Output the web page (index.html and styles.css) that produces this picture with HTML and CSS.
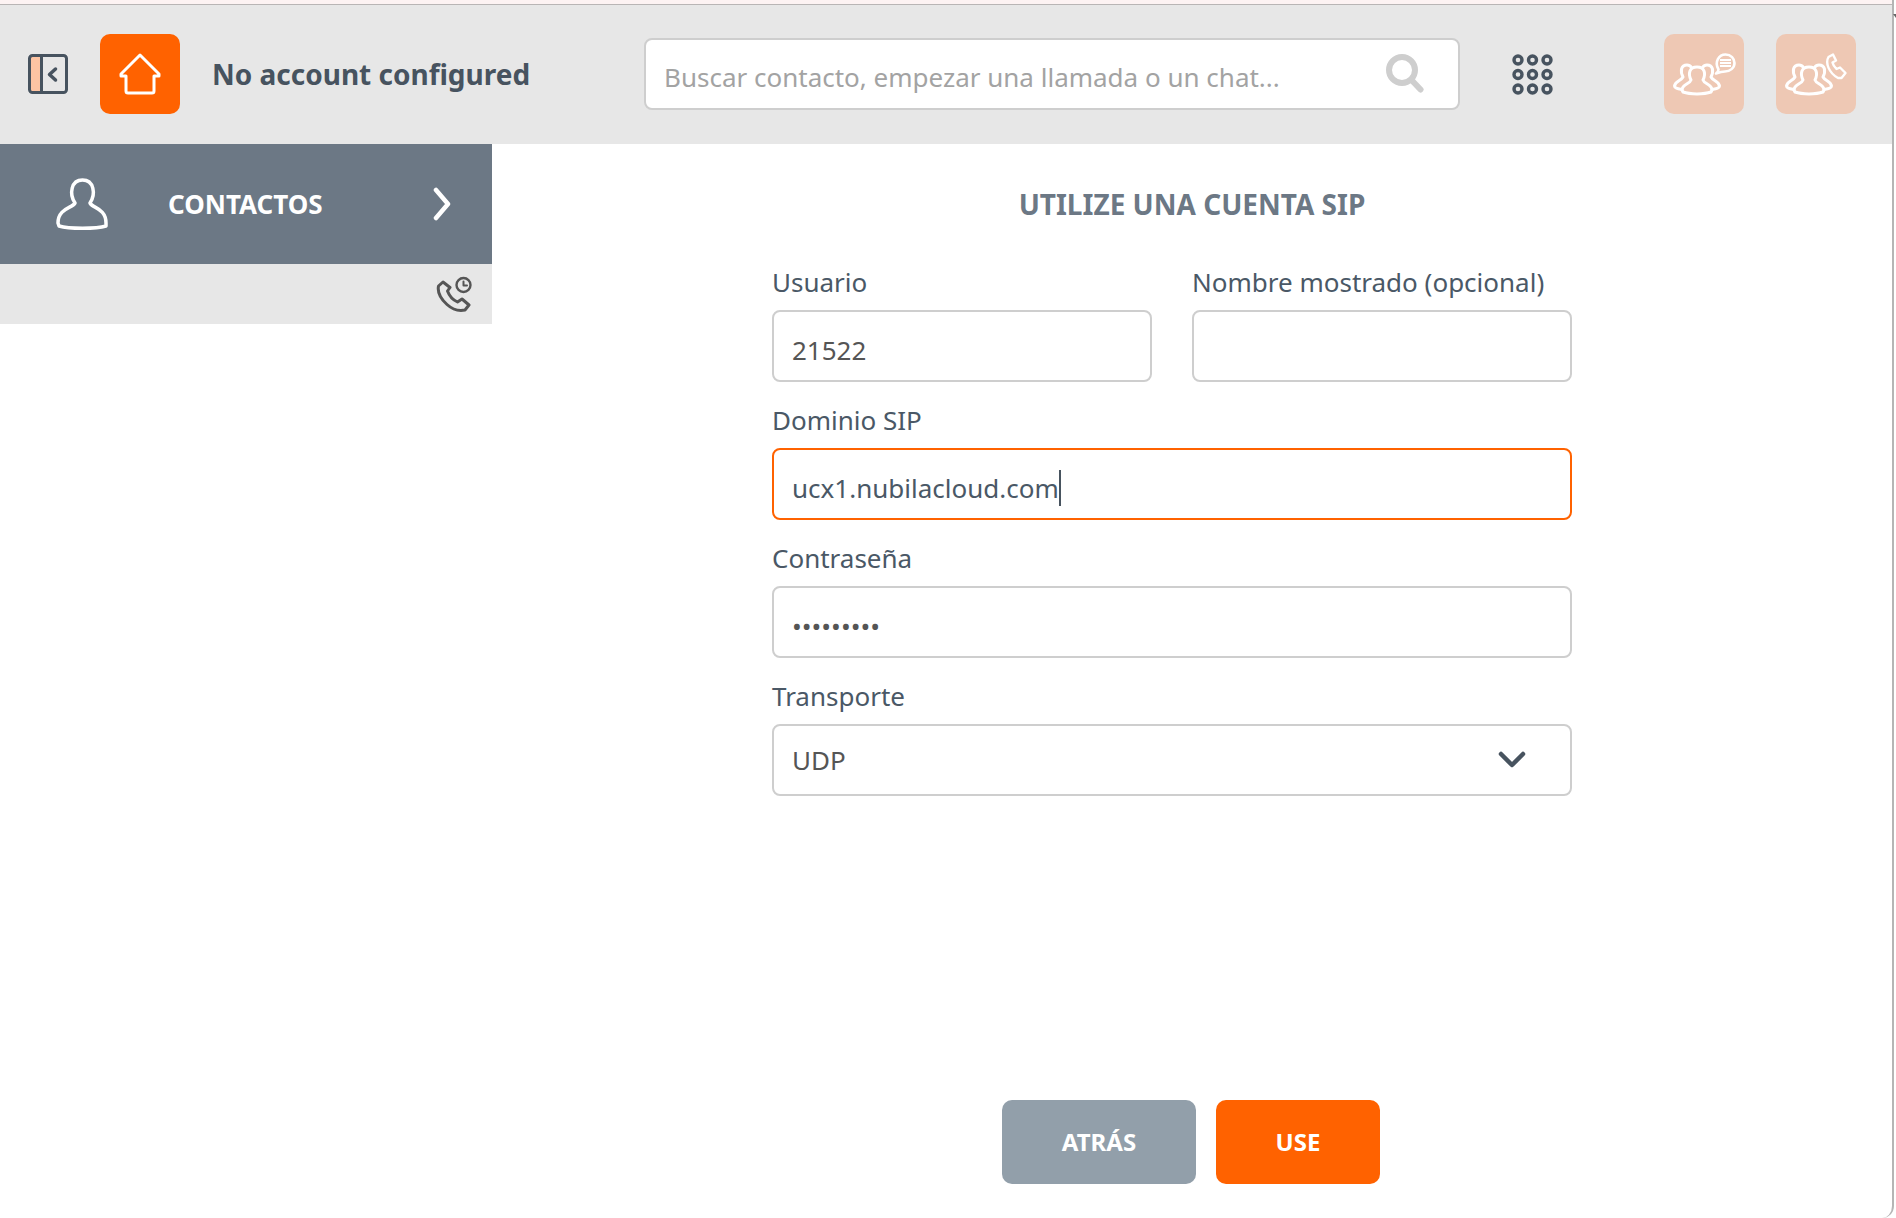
FILE: index.html
```html
<!DOCTYPE html>
<html lang="es">
<head>
<meta charset="utf-8">
<title>Cuenta SIP</title>
<link rel="stylesheet" href="styles.css">
</head>
<body>
<div class="window">
  <div class="topstrip"></div>
  <header class="header">
    <button class="toggle" aria-label="Panel">
      <svg width="40" height="40" viewBox="0 0 40 40"><rect x="3" y="3" width="9" height="34" fill="#fdc4a3"/><rect x="1.500" y="1.500" width="37" height="37" rx="3" fill="none" stroke="#47535f" stroke-width="3"/><path d="M13.500 2v36" stroke="#47535f" stroke-width="3"/><path d="M27.500 15l-6 5.500 6 5.500" fill="none" stroke="#47535f" stroke-width="3.500" stroke-linecap="round" stroke-linejoin="round"/></svg>
    </button>
    <div class="tile tile-home">
      <svg width="80" height="80" viewBox="0 0 80 80"><path d="M40 21L21 40V42H26V57Q26 59 28 59H52Q54 59 54 57V42H59V40Z" fill="none" stroke="#fff" stroke-width="3" stroke-linejoin="round"/></svg>
    </div>
    <div class="account">No account configured</div>
    <div class="search">
      <span class="search-text">Buscar contacto, empezar una llamada o un chat...</span>
      <svg width="38" height="40" viewBox="0 0 38 40"><circle cx="16" cy="16" r="13" fill="none" stroke="#cecece" stroke-width="6"/><path d="M25.500 26L34.500 35.500" stroke="#cecece" stroke-width="6" stroke-linecap="round"/></svg>
    </div>
    <div class="dial">
      <svg width="41" height="41" viewBox="0 0 41 41" fill="none" stroke="#47535f" stroke-width="3.400"><circle cx="6" cy="6" r="4"/><circle cx="20.500" cy="6" r="4"/><circle cx="35" cy="6" r="4"/><circle cx="6" cy="20.500" r="4"/><circle cx="20.500" cy="20.500" r="4"/><circle cx="35" cy="20.500" r="4"/><circle cx="6" cy="35" r="4"/><circle cx="20.500" cy="35" r="4"/><circle cx="35" cy="35" r="4"/></svg>
    </div>
    <div class="tile tile-light tile-first">
      <svg width="80" height="80" viewBox="0 0 80 80" fill="none" stroke="#fff" stroke-width="3" stroke-linejoin="round" stroke-linecap="round">
        <path d="M18 55.500C13 54.500 10.500 54 10.500 52C11 47 17 47 19 43C16 37 17 31 23 31C25 31 26.500 32 27.500 33.500"/>
        <path d="M48 55.500C53 54.500 55.500 54 55.500 52C55 47 49 47 47 43C50 37 49 31 43 31C41 31 39.500 32 38.500 33.500"/>
        <path d="M27 46C24 40 25 33 33 33C41 33 42 40 39 46C40 50 48 50 48 56L47 58C40 60.500 26 60.500 19 58L18 56C18 50 26 50 27 46Z"/>
        <path d="M54.500 35.500C50 28 55 20.500 61.500 20.500C67 20.500 70.500 24.500 70.500 29C70.500 34 66 37.500 61 37.500C59 37.500 57.500 37.500 52 39.500C54 38 54.500 37 54.500 35.500Z" stroke-width="2.600"/>
        <path d="M56 26H67M56 29H67M56 32H67" stroke-width="2" stroke-linecap="butt"/>
      </svg>
    </div>
    <div class="tile tile-light tile-second">
      <svg width="80" height="80" viewBox="0 0 80 80" fill="none" stroke="#fff" stroke-width="3" stroke-linejoin="round" stroke-linecap="round">
        <path d="M18 55.500C13 54.500 10.500 54 10.500 52C11 47 17 47 19 43C16 37 17 31 23 31C25 31 26.500 32 27.500 33.500"/>
        <path d="M48 55.500C53 54.500 55.500 54 55.500 52C55 47 49 47 47 43C50 37 49 31 43 31C41 31 39.500 32 38.500 33.500"/>
        <path d="M27 46C24 40 25 33 33 33C41 33 42 40 39 46C40 50 48 50 48 56L47 58C40 60.500 26 60.500 19 58L18 56C18 50 26 50 27 46Z"/>
        <path d="M57 20.500L52.500 23C49 29 53 39 62 44L65.500 44L69.500 39L64 33.500L60.500 35C58.500 33 57 31 56.500 28.500L60 26.500Z" stroke-width="2.400"/>
      </svg>
    </div>
  </header>
  <div class="body">
    <aside class="sidebar">
      <div class="nav-item">
        <svg width="52" height="52" viewBox="0 0 52 52" fill="none" stroke="#fff" stroke-width="3.500" stroke-linejoin="round"><path d="M19 25C13 16 15 2 26.500 2C38 2 40 16 34 25C36 30 50 30 50 45L50 48C40 51 13 51 3 48L2 45C2 30 17 30 19 25Z"/></svg>
        <span class="nav-label">CONTACTOS</span>
        <svg width="18" height="34" viewBox="0 0 18 34" fill="none" stroke="#fff" stroke-width="4.500" stroke-linecap="round" stroke-linejoin="round"><path d="M3 3L15 17L3 31"/></svg>
      </div>
      <div class="sub-bar">
        <svg width="36" height="36" viewBox="0 0 36 36" fill="none" stroke="#555" stroke-width="3" stroke-linecap="round" stroke-linejoin="round"><path d="M7 6L2.500 10C1.500 15 4 22 11 28.500C17 34 24 35 29 34L33 29L26 23L21.500 26C17 24 13 19 11.500 15L14 11.500Z"/><circle cx="27.500" cy="9" r="7" stroke-width="2.400"/><path d="M27.500 5.500V9.500H31" stroke-width="2"/></svg>
      </div>
    </aside>
    <main class="main">
      <h1 class="title">UTILIZE UNA CUENTA SIP</h1>
      <form class="form">
        <div class="field">
          <label class="label">Usuario</label>
          <div class="input">21522</div>
        </div>
        <div class="field">
          <label class="label">Nombre mostrado (opcional)</label>
          <div class="input"></div>
        </div>
        <div class="field field-wide">
          <label class="label">Dominio SIP</label>
          <div class="input input-focus">ucx1.nubilacloud.com<span class="caret"></span></div>
        </div>
        <div class="field field-wide">
          <label class="label">Contraseña</label>
          <div class="input">•••••••••</div>
        </div>
        <div class="field field-wide">
          <label class="label">Transporte</label>
          <div class="input input-select">UDP
            <svg width="28" height="18" viewBox="0 0 28 18" fill="none" stroke="#47535f" stroke-width="4.500" stroke-linecap="round" stroke-linejoin="round"><path d="M3 3L14 14L25 3"/></svg>
          </div>
        </div>
      </form>
      <div class="actions">
        <button class="btn btn-back" type="button">ATRÁS</button>
        <button class="btn btn-use" type="button">USE</button>
      </div>
    </main>
  </div>
</div>
<div class="edge-mark"></div>
</body>
</html>
```

FILE: styles.css
```css
* { box-sizing: border-box; }
html, body { margin: 0; height: 100%; }
body {
  position: relative;
  width: 1896px;
  height: 1218px;
  overflow: hidden;
  background: #fff;
  font-family: "Noto Sans", "Open Sans", sans-serif;
  color: #47535f;
}
.window {
  width: 1894px;
  height: 1218px;
  display: flex;
  flex-direction: column;
  border-right: 2px solid #b5b5b5;
  border-bottom-right-radius: 12px;
  overflow: hidden;
}
.edge-mark {
  position: absolute;
  top: 14px;
  right: 0;
  width: 0;
  height: 0;
  border-left: 3px solid transparent;
  border-top: 4px solid #666;
}
.topstrip {
  height: 5px;
  flex: none;
  background: #fdf3f3;
  border-bottom: 1px solid #b9b5b5;
}
.header {
  height: 139px;
  flex: none;
  background: #e7e7e7;
  display: flex;
  align-items: center;
  padding: 0 0 1px 28px;
}
.toggle {
  width: 40px;
  height: 40px;
  padding: 0;
  border: 0;
  background: none;
  display: flex;
  margin-right: 32px;
}
.tile {
  width: 80px;
  height: 80px;
  flex: none;
  border-radius: 10px;
  display: flex;
}
.tile-home { background: #ff6200; }
.tile-light { background: #eec8b4; }
.tile-first { margin-left: 111px; }
.tile-second { margin-left: 32px; }
.account {
  width: 432px;
  margin-left: 32px;
  font-size: 28px;
  font-weight: 700;
  color: #47535f;
}
.search {
  width: 816px;
  height: 72px;
  background: #fff;
  border: 2px solid #cecece;
  border-radius: 8px;
  display: flex;
  align-items: center;
  justify-content: space-between;
  padding: 0 34px 0 18px;
  font-size: 26px;
  color: #a3a3a3;
}
.search-text { position: relative; top: 3px; }
.dial { margin-left: 52px; display: flex; }
.body { flex: 1; display: flex; min-height: 0; }
.sidebar { width: 492px; flex: none; }
.nav-item {
  height: 120px;
  background: #6c7885;
  display: flex;
  align-items: center;
  padding: 0 41px 0 56px;
  color: #fff;
}
.nav-label {
  margin-left: 60px;
  font-size: 26px;
  font-weight: 700;
  flex: 1;
}
.sub-bar {
  height: 60px;
  background: #e7e7e7;
  display: flex;
  justify-content: flex-end;
  align-items: flex-start;
  padding: 12px 20px 0 0;
}
.main {
  flex: 1;
  display: flex;
  flex-direction: column;
  align-items: center;
  padding-top: 40px;
}
.title {
  margin: 0;
  font-size: 28px;
  line-height: 40px;
  font-weight: 700;
  color: #6c7885;
}
.form {
  width: 840px;
  margin-top: 40px;
  padding-right: 40px;
  display: grid;
  grid-template-columns: 380px 380px;
  column-gap: 40px;
  row-gap: 20px;
}
.field { display: flex; flex-direction: column; }
.field-wide { grid-column: 1 / 3; }
.label {
  height: 46px;
  font-size: 26px;
  line-height: 36px;
  color: #4a5866;
}
.input {
  height: 72px;
  border: 2px solid #cecece;
  border-radius: 8px;
  background: #fff;
  padding: 7px 18px 0;
  font-size: 26px;
  color: #555;
  display: flex;
  align-items: center;
}
.input-focus { border-color: #ff6200; color: #4a5866; }
.caret {
  width: 2px;
  height: 36px;
  background: #47535f;
}
.input-select { justify-content: space-between; padding: 0 44px 0 18px; }
.actions {
  margin-top: auto;
  margin-bottom: 34px;
  margin-right: 2px;
  display: flex;
  gap: 20px;
}
.btn {
  height: 84px;
  padding: 0 0 2px;
  border: 0;
  border-radius: 10px;
  color: #fff;
  font-family: inherit;
  font-size: 24px;
  font-weight: 700;
}
.btn-back { width: 194px; background: #929faa; }
.btn-use { width: 164px; background: #ff6200; }
```
